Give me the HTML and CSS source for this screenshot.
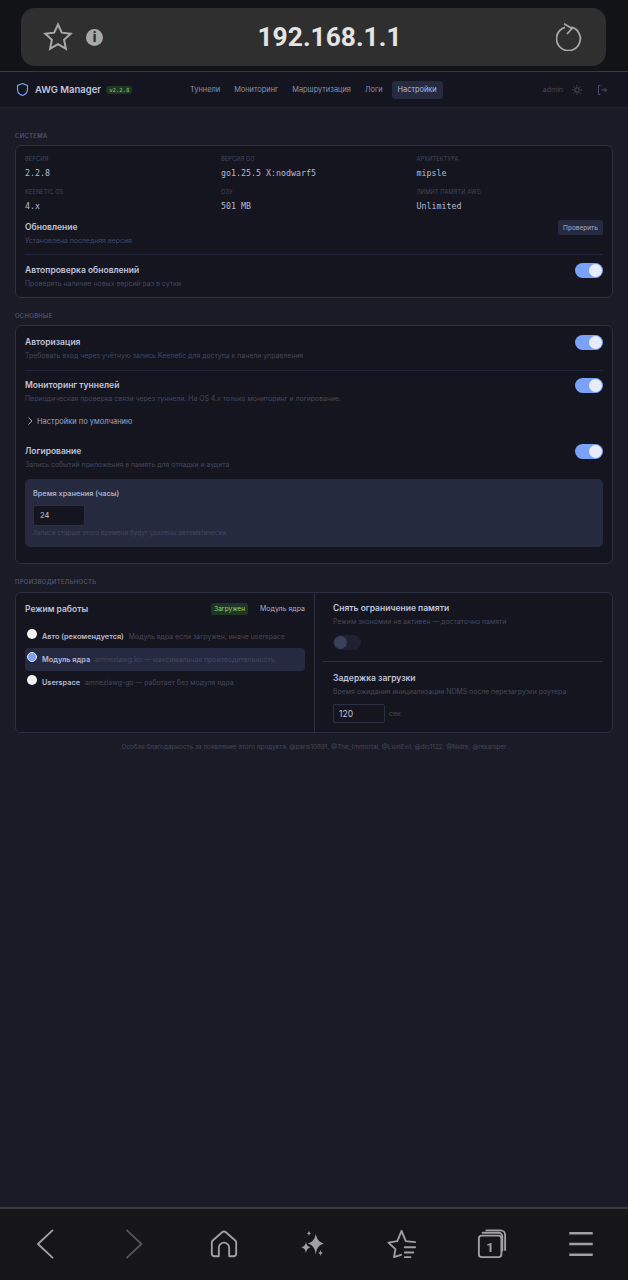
FILE: index.html
```html
<!DOCTYPE html>
<html lang="ru">
<head>
  <meta charset="UTF-8" />
  <meta name="viewport" content="width=device-width, initial-scale=1.0"/>
  <title>AWG Manager</title>
  <link rel="stylesheet" href="styles.css">
</head>
<body>
  <div class="screen">
    <div class="url-bar">
      <div class="url-pill">
        <svg class="icon-star" viewBox="0 0 32 32"><path d="M16 3.500l3.800 8.200 8.900 1.100-6.600 6 1.800 8.900-7.900-4.500-7.900 4.500 1.800-8.900-6.600-6 8.900-1.100z"/></svg>
        <span class="info-dot">i</span>
        <span class="url-text">192.168.1.1</span>
        <svg class="icon-reload" viewBox="0 0 26 28"><path d="M9 4.300A11.900 11.900 0 1 0 15.500 4.200"/><path d="M8 .8l8 4.700-5 5.500"/></svg>
      </div>
    </div>

    <header class="app-header">
      <div class="brand">
        <svg class="icon-shield" viewBox="0 0 24 24"><path d="M12 2.500l8 3v6c0 5-3.400 8.600-8 10.200-4.600-1.600-8-5.200-8-10.200v-6z"/></svg>
        <span class="brand-name">AWG Manager</span>
        <span class="version">v2.2.8</span>
      </div>
      <nav class="nav">
        <a>Туннели</a>
        <a>Мониторинг</a>
        <a>Маршрутизация</a>
        <a>Логи</a>
        <a class="active">Настройки</a>
      </nav>
      <div class="user">
        <span class="user-name">admin</span>
        <svg class="icon-small" viewBox="0 0 24 24"><circle cx="12" cy="12" r="4.500"/><path d="M12 2v3M12 19v3M2 12h3M19 12h3M5 5l2 2M17 17l2 2M5 19l2-2M17 7l2-2"/></svg>
        <svg class="icon-small" viewBox="0 0 24 24"><path d="M9 3H5v18h4M11 12h10M17 8l4 4-4 4"/></svg>
      </div>
    </header>

    <main class="main">
      <h2 class="section-title">Система</h2>
      <section class="card card-system">
        <div class="info-grid">
          <div><div class="info-label">Версия</div><div class="info-value">2.2.8</div></div>
          <div><div class="info-label">Версия Go</div><div class="info-value">go1.25.5 X:nodwarf5</div></div>
          <div><div class="info-label">Архитектура</div><div class="info-value">mipsle</div></div>
          <div><div class="info-label">Keenetic OS</div><div class="info-value">4.x</div></div>
          <div><div class="info-label">ОЗУ</div><div class="info-value">501 MB</div></div>
          <div><div class="info-label">Лимит памяти AWG</div><div class="info-value">Unlimited</div></div>
        </div>
        <div class="row row-update">
          <div>
            <div class="row-title">Обновление</div>
            <div class="row-desc">Установлена последняя версия</div>
          </div>
          <button class="btn-check">Проверить</button>
        </div>
        <div class="row row-line">
          <div>
            <div class="row-title">Автопроверка обновлений</div>
            <div class="row-desc">Проверять наличие новых версий раз в сутки</div>
          </div>
          <span class="toggle on"></span>
        </div>
      </section>

      <h2 class="section-title">Основные</h2>
      <section class="card card-main">
        <div class="row row-auth">
          <div>
            <div class="row-title">Авторизация</div>
            <div class="row-desc">Требовать вход через учётную запись Keenetic для доступа к панели управления</div>
          </div>
          <span class="toggle on"></span>
        </div>
        <div class="row row-line row-monitor">
          <div>
            <div class="row-title">Мониторинг туннелей</div>
            <div class="row-desc">Периодическая проверка связи через туннели. На OS 4.x только мониторинг и логирование.</div>
          </div>
          <span class="toggle on"></span>
        </div>
        <div class="defaults">
          <svg viewBox="0 0 10 10"><path d="M3.500 1.500L7 5 3.500 8.500"/></svg>
          <span>Настройки по умолчанию</span>
        </div>
        <div class="row row-log">
          <div>
            <div class="row-title">Логирование</div>
            <div class="row-desc">Запись событий приложения в память для отладки и аудита</div>
          </div>
          <span class="toggle on"></span>
        </div>
        <div class="retention">
          <div class="retention-label">Время хранения (часы)</div>
          <input class="field field-hours" type="text" value="24" />
          <div class="row-desc">Записи старше этого времени будут удалены автоматически</div>
        </div>
      </section>

      <h2 class="section-title section-perf">Производительность</h2>
      <section class="card card-perf">
        <div class="perf-left">
          <div class="mode-head">
            <div class="row-title mode-title">Режим работы</div>
            <span class="badge">Загружен</span>
            <span class="mode-current">Модуль ядра</span>
          </div>
          <div class="mode">
            <span class="radio"></span>
            <b>Авто (рекомендуется)</b>
            <span class="row-desc">Модуль ядра если загружен, иначе userspace</span>
          </div>
          <div class="mode selected">
            <span class="radio checked"></span>
            <b>Модуль ядра</b>
            <span class="row-desc">amneziawg.ko — максимальная производительность</span>
          </div>
          <div class="mode">
            <span class="radio"></span>
            <b>Userspace</b>
            <span class="row-desc">amneziawg-go — работает без модуля ядра</span>
          </div>
        </div>
        <div class="perf-right">
          <div class="perf-block">
            <div class="row-title">Снять ограничение памяти</div>
            <div class="row-desc">Режим экономии не активен — достаточно памяти</div>
            <span class="toggle off"></span>
          </div>
          <div class="perf-block perf-delay">
            <div class="row-title">Задержка загрузки</div>
            <div class="row-desc">Время ожидания инициализации NDMS после перезагрузки роутера</div>
            <div class="delay-input">
              <input class="field field-delay" type="text" value="120" />
              <span class="row-desc">сек</span>
            </div>
          </div>
        </div>
      </section>

      <p class="thanks">Особая благодарность за появление этого продукта: @paris10891, @The_Immortal, @LionEvil, @dio1122, @Nidre, @rexaniper</p>
    </main>

    <footer class="bottom-bar">
      <svg viewBox="0 0 32 32"><path d="M24 1.500L8.500 16 24 30.500"/></svg>
      <svg class="dim" viewBox="0 0 32 32"><path d="M8.500 1.500L24 16 8.500 30.500"/></svg>
      <svg viewBox="0 0 32 32"><path d="M3 14.500a3 3 0 0 1 1-2.300L14 3.500a3 3 0 0 1 4 0l10 8.700a3 3 0 0 1 1 2.300V26a3 3 0 0 1-3 3h-4.500V20a5.500 5.500 0 0 0-11 0v9H6a3 3 0 0 1-3-3z"/></svg>
      <svg class="filled" viewBox="0 0 32 32"><path d="M19 5c1.200 6 3 8.500 8.500 10.500C22 17.500 20.200 20 19 27c-1.200-7-3-9.500-8.500-11.500C16 13.500 17.800 11 19 5zM8.500 13.500c.7 3.500 1.700 5 5 6-3.300 1-4.300 2.500-5 6-.7-3.500-1.700-5-5-6 3.300-1 4.300-2.500 5-6zM11.700 1.500c.3 1.800.8 2.500 2.300 3-1.500.5-2 1.200-2.300 3-.3-1.800-.8-2.500-2.300-3 1.500-.5 2-1.200 2.300-3zM24 22.500c.3 1.800.8 2.600 2.500 3.200-1.700.6-2.200 1.400-2.500 3.200-.3-1.800-.8-2.600-2.500-3.200 1.700-.6 2.200-1.400 2.500-3.200z"/></svg>
      <svg viewBox="0 0 32 32"><path d="M15 27.500l-7.500 2.500 1.500-8.500-7.500-7 9.500-1.500 4.500-11 4.500 11 10 1"/><path d="M19 19.500h11M19 25h9M19 30h6"/></svg>
      <svg viewBox="0 0 32 32"><rect x="2" y="7" width="24" height="23" rx="3"/><path d="M6 4h17a4 4 0 0 1 4 4v15"/><path d="M10 1.500h15a5 5 0 0 1 5 5v16"/><text x="14" y="24" text-anchor="middle" class="tab-count">1</text></svg>
      <svg class="menu-icon" viewBox="0 0 32 32"><path d="M3.500 4.500h25M3.500 16h25M3.500 27.500h25"/></svg>
    </footer>
  </div>
</body>
</html>
```

FILE: styles.css
```css
* {
  margin: 0; padding: 0; box-sizing: border-box;
}
body {
  font-family: Inter, "Noto Sans", sans-serif;
  background-color: #1a1b26;
  color: #c0c4dc;
}
.screen {
  display: flex;
  flex-direction: column;
  height: 1280px;
  overflow: hidden;
}

/* browser chrome */
.url-bar {
  height: 72px;
  padding: 8px 22px 0 21px;
  background-color: #121316;
  border-bottom: 1px solid #3a3a3d;
}
.url-pill {
  display: flex;
  align-items: center;
  height: 58px;
  padding: 0 24px 0 21px;
  background-color: #2f2f2f;
  border-radius: 14px;
}
.icon-star {
  width: 32px;
  height: 32px;
  fill: none;
  stroke: #a8a8a8;
  stroke-width: 2;
}
.info-dot {
  width: 17px;
  height: 17px;
  margin-left: 12px;
  border-radius: 50%;
  background-color: #a8a8a8;
  color: #2f2f2f;
  font-size: 13px;
  font-weight: 800;
  line-height: 17px;
  text-align: center;
}
.url-text {
  flex: 1;
  text-align: center;
  color: #e4e4e4;
  font-family: Roboto, sans-serif;
  font-size: 26.4px;
  font-weight: 700;
}
.icon-reload {
  width: 26px;
  height: 28px;
  fill: none;
  stroke: #a8a8a8;
  stroke-width: 1.8;
}

/* app header */
.app-header {
  display: flex;
  align-items: center;
  height: 36px;
  padding: 0 20px 0 15px;
  background-color: #14151e;
  border-bottom: 1px solid #1f2130;
}
.brand {
  display: flex;
  align-items: center;
  width: 170px;
}
.icon-shield {
  width: 15px;
  height: 17px;
  fill: none;
  stroke: #7aa2f7;
  stroke-width: 1.8;
}
.brand-name {
  margin-left: 5px;
  color: #c0c4dc;
  font-size: 9.5px;
  font-weight: 600;
}
.version {
  margin-left: 5px;
  padding: 1px 3px;
  border-radius: 3px;
  background-color: #1f3526;
  color: #9ece6a;
  font-family: "DejaVu Sans Mono", monospace;
  font-size: 5.6px;
}
.nav {
  display: flex;
  align-items: center;
  gap: 4px;
}
.nav a {
  padding: 4px 5px;
  border-radius: 3px;
  color: #8b90ad;
  font-size: 7.4px;
  line-height: 10px;
}
.nav a.active {
  padding: 4px 6px;
  background-color: #252a41;
  color: #b4b9d6;
}
.user {
  display: flex;
  align-items: center;
  margin-left: auto;
}
.user-name {
  color: #44475f;
  font-size: 7px;
}
.icon-small {
  width: 12px;
  height: 12px;
  margin-left: 8px;
  fill: none;
  stroke: #5a5f7c;
  stroke-width: 1.5;
}
.icon-small:last-child {
  margin-left: 13px;
}

/* content */
.main {
  flex: 1;
  padding: 23px 15px 0 15px;
}
.section-title {
  height: 10px;
  margin-bottom: 4px;
  color: #565a78;
  font-size: 5.9px;
  font-weight: 500;
  line-height: 10px;
  letter-spacing: 0.35px;
  text-transform: uppercase;
}
.section-perf {
  margin-bottom: 5px;
}
.card {
  width: 598px;
  margin-bottom: 13px;
  padding: 0 9px;
  background-color: #14151e;
  border: 1px solid #2c2f42;
  border-radius: 6px;
}
.card-system {
  height: 153px;
  padding-top: 7px;
}
.info-grid {
  display: grid;
  grid-template-columns: 196px 195.5px 1fr;
  grid-auto-rows: 33px;
}
.info-label {
  height: 12px;
  color: #44475f;
  font-size: 5.6px;
  line-height: 12px;
  letter-spacing: 0.15px;
  text-transform: uppercase;
}
.info-value {
  height: 16px;
  color: #b4b9d6;
  font-family: "DejaVu Sans Mono", monospace;
  font-size: 8.3px;
  line-height: 16px;
}
.row {
  display: flex;
  justify-content: space-between;
  align-items: flex-start;
  padding-top: 8px;
}
.row-update {
  height: 35px;
  padding-top: 1px;
}
.row-line {
  height: 44px;
  border-top: 1px solid #22243a;
}
.row-auth {
  height: 44px;
  padding-top: 9px;
}
.row-monitor {
  height: 41px;
  padding-top: 7px;
}
.row-log {
  height: 48px;
  padding-top: 13px;
}
.row-title {
  color: #c0c4dc;
  font-size: 8.5px;
  font-weight: 600;
  line-height: 14px;
}
.row-desc {
  color: #44475f;
  font-size: 6.9px;
  line-height: 14px;
}
.btn-check {
  width: 45px;
  height: 15px;
  border: none;
  border-radius: 2px;
  background-color: #252a41;
  color: #a9aecb;
  font-family: Inter, sans-serif;
  font-size: 6.5px;
}
.toggle {
  position: relative;
  display: block;
  flex: none;
  width: 28px;
  height: 15px;
  border-radius: 8px;
}
.toggle::after {
  content: "";
  position: absolute;
  top: 1px;
  width: 13px;
  height: 13px;
  border-radius: 50%;
}
.toggle.on {
  background-color: #7aa2f7;
}
.toggle.on::after {
  right: 1px;
  background-color: #e8ecf8;
}
.toggle.off {
  margin-top: 6px;
  background-color: #1f2133;
}
.toggle.off::after {
  left: 1px;
  background-color: #3a3f5c;
}
.card-main {
  height: 239px;
}
.defaults {
  display: flex;
  align-items: center;
  height: 20px;
  color: #a0a5c4;
  font-size: 7.5px;
}
.defaults svg {
  width: 10px;
  height: 10px;
  margin-right: 2px;
  fill: none;
  stroke: #a0a5c4;
  stroke-width: 1;
}
.retention {
  height: 68px;
  padding: 9px 8px 0 8px;
  background-color: #252a3f;
  border-radius: 5px;
}
.retention-label {
  color: #a9aecb;
  font-size: 7.3px;
  font-weight: 600;
  line-height: 12px;
}
.retention .row-desc {
  font-size: 6.4px;
}
.field {
  display: block;
  border: 1px solid #2c2f42;
  border-radius: 2px;
  background-color: #14151e;
  color: #c0c4dc;
  font-family: Inter, sans-serif;
  font-size: 7.5px;
  outline: none;
}
.field-hours {
  width: 52px;
  height: 21px;
  margin-top: 5px;
  padding-left: 6px;
}
.card-perf {
  display: flex;
  height: 141px;
  padding: 0;
  margin-bottom: 0;
}
.perf-left {
  width: 299px;
  padding: 0 9px;
  border-right: 1px solid #2c2f42;
}
.mode-head {
  display: flex;
  align-items: center;
  height: 31px;
  margin-bottom: 1px;
}
.mode-title {
  flex: 1;
}
.badge {
  padding: 2px 3px;
  border-radius: 3px;
  background-color: #1f3526;
  color: #9ece6a;
  font-size: 6.5px;
}
.mode-current {
  margin-left: 12px;
  color: #a9aecb;
  font-size: 7px;
}
.mode {
  display: flex;
  align-items: center;
  height: 23px;
  padding-left: 2px;
  border-radius: 4px;
}
.mode b {
  margin-right: 5px;
  color: #b4b9d6;
  font-size: 7.3px;
  font-weight: 600;
}
.mode.selected {
  background-color: #252a41;
}
.radio {
  flex: none;
  width: 10px;
  height: 10px;
  margin: -5px 5px 0 0;
  border-radius: 50%;
  background-color: #f2f2f2;
}
.radio.checked {
  border: 1.5px solid #e8e8f0;
  background-color: #7aa2f7;
}
.perf-right {
  flex: 1;
  padding: 0 9px 0 8px;
}
.perf-block {
  padding: 8px 0 0 10px;
}
.perf-delay {
  height: 72px;
  margin-top: 11px;
  padding-top: 9px;
  border-top: 1px solid #2c2f42;
}
.delay-input {
  display: flex;
  align-items: center;
  gap: 4px;
  margin-top: 5px;
}
.field-delay {
  width: 52px;
  height: 19px;
  padding-left: 5px;
  font-size: 8.5px;
}
.thanks {
  margin-top: 9px;
  color: #44475f;
  font-size: 6.35px;
  line-height: 10px;
  text-align: center;
}

/* browser bottom bar */
.bottom-bar {
  display: flex;
  justify-content: space-between;
  align-items: center;
  height: 73px;
  padding: 0 32px 2px 30px;
  background-color: #161618;
  border-top: 2px solid #3a3a40;
}
.bottom-bar svg {
  width: 30px;
  height: 30px;
  fill: none;
  stroke: #a0a0a0;
  stroke-width: 2;
  stroke-linecap: round;
  stroke-linejoin: round;
}
.bottom-bar svg.dim {
  stroke: #555;
}
.bottom-bar svg.filled {
  fill: #a0a0a0;
  stroke: none;
}
.bottom-bar svg.menu-icon {
  stroke-width: 2.6;
  stroke-linecap: butt;
}
.tab-count {
  fill: #a0a0a0;
  stroke: none;
  font-family: Roboto, sans-serif;
  font-size: 14px;
  font-weight: 700;
}
```
